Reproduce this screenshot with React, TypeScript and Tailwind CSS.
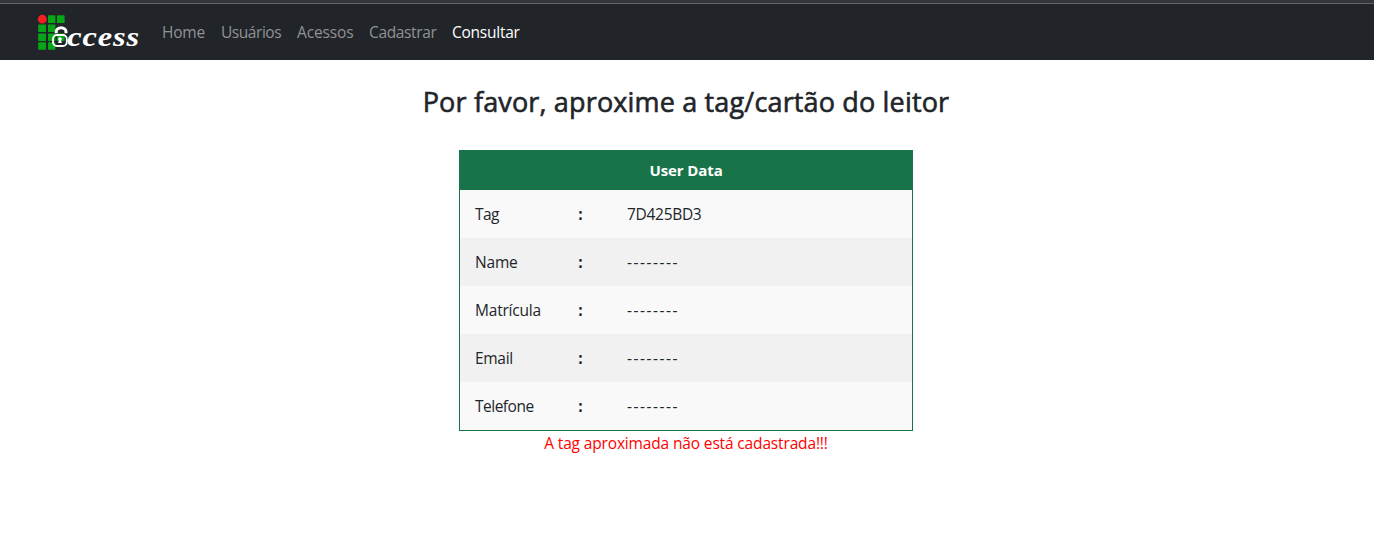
const links = [
  { label: 'Home', width: 'w-[59px]', tracking: 'tracking-[-0.2px]' },
  { label: 'Usuários', width: 'w-[76px]', tracking: 'tracking-[-0.45px]' },
  { label: 'Acessos', width: 'w-[72px]', tracking: 'tracking-[-0.15px]' },
  { label: 'Cadastrar', width: 'w-[83px]', tracking: 'tracking-[-0.35px]' },
  { label: 'Consultar', width: 'w-[84px]', tracking: 'tracking-[-0.25px]', active: true },
];

const rows = [
  { label: 'Tag', value: '7D425BD3', labelTracking: 'tracking-[-0.6px]', valueTracking: 'tracking-[-0.3px]' },
  { label: 'Name', value: '--------', labelTracking: 'tracking-[-0.2px]', valueTracking: 'tracking-[1.5px]' },
  { label: 'Matrícula', value: '--------', labelTracking: 'tracking-[-0.2px]', valueTracking: 'tracking-[1.5px]' },
  { label: 'Email', value: '--------', labelTracking: 'tracking-[-0.3px]', valueTracking: 'tracking-[1.5px]' },
  { label: 'Telefone', value: '--------', labelTracking: 'tracking-[-0.5px]', valueTracking: 'tracking-[1.5px]' },
];

function Logo() {
  return (
    <svg width="106" height="40" viewBox="36 12 106 40" role="img" aria-label="Access">
      <circle cx="42.3" cy="19.2" r="4.4" fill="#f42020" />
      <g fill="#08a518">
        <rect x="48" y="15.3" width="7.4" height="7.7" rx=".6" />
        <rect x="57" y="15.3" width="7.6" height="7.7" rx=".6" />
        <rect x="38.2" y="24.5" width="7.8" height="7.6" rx=".6" />
        <rect x="48" y="24.5" width="7.4" height="7.6" rx=".6" />
        <rect x="38.2" y="33.5" width="7.8" height="7.4" rx=".6" />
        <rect x="48" y="33.5" width="7.4" height="7.4" rx=".6" />
        <rect x="57" y="33.5" width="7.6" height="7.4" rx=".6" />
        <rect x="38.2" y="42.2" width="7.8" height="7.5" rx=".6" />
        <rect x="48" y="42.2" width="7.4" height="7.5" rx=".6" />
      </g>
      <path d="M56.2 33.2v-1.4a4.9 4.1 0 0 1 9.8 0v1.4" fill="none" stroke="#fff" strokeWidth="3" />
      <rect x="53" y="35" width="13.8" height="11" rx="4" fill="none" stroke="#fff" strokeWidth="1.8" />
      <circle cx="60" cy="39" r="1.8" fill="#fff" />
      <path d="M59.3 39h1.4l1.2 4h-3.8z" fill="#fff" />
      <text
        x="56"
        y="46.3"
        transform="scale(1.2 1)"
        fill="#fff"
        fontFamily="Liberation Serif, serif"
        fontStyle="italic"
        fontWeight="bold"
        fontSize="27"
        textLength="60"
        lengthAdjust="spacing"
      >
        ccess
      </text>
    </svg>
  );
}

export default function App() {
  return (
    <div className="min-h-[534px] bg-white font-['Open_Sans','Noto_Sans',sans-serif] text-[15.5px] leading-6 text-[#212529]">
      <header>
        <div className="h-[4px] border-b border-[#626365] bg-[#35363a]" />
        <nav className="flex h-[56px] items-center bg-[#212529] pl-9">
          <Logo />
          <ul className="ml-3 flex">
            {links.map((l) => (
              <li key={l.label} className={`${l.width} px-2 whitespace-nowrap ${l.active ? 'text-white' : 'text-[#909294]'}`}>
                <a className={l.tracking}>{l.label}</a>
              </li>
            ))}
          </ul>
        </nav>
      </header>
      <main className="flex flex-col items-center pr-[2px] pt-[25px]">
        <h3 className="text-[27px] leading-[34px] font-medium tracking-[0.16px] whitespace-nowrap [-webkit-text-stroke:0.6px_#212529]">
          Por favor, aproxime a tag/cartão do leitor
        </h3>
        <div className="mt-[31px] w-[454px] border border-[#187348]">
          <table className="w-full table-fixed border-collapse">
            <colgroup>
              <col className="w-[102px]" />
              <col className="w-[36px]" />
              <col />
            </colgroup>
            <thead>
              <tr className="h-[39px] bg-[#187348] text-white">
                <th colSpan={3} className="p-0 pb-[2px] text-[15px] font-bold tracking-[-0.1px]">
                  User Data
                </th>
              </tr>
            </thead>
            <tbody>
              {rows.map((r) => (
                <tr key={r.label} className="h-12 odd:bg-[#f9f9f9] even:bg-[#f1f1f1]">
                  <td className="p-0 pl-[15px]">
                    <span className={r.labelTracking}>{r.label}</span>
                  </td>
                  <td className="p-0 pl-px text-center font-bold">:</td>
                  <td className="p-0 pl-[29px]">
                    <span className={r.valueTracking}>{r.value}</span>
                  </td>
                </tr>
              ))}
            </tbody>
          </table>
        </div>
        <p className="tracking-[-0.15px] text-[#f00]">A tag aproximada não está cadastrada!!!</p>
      </main>
    </div>
  );
}
